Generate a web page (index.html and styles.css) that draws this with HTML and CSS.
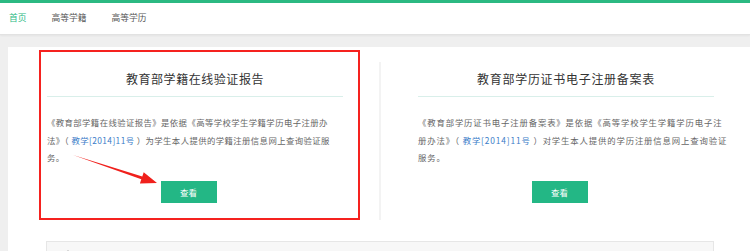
FILE: index.html
```html
<!DOCTYPE html>
<html lang="zh-CN">
<head>
    <meta charset="UTF-8">
    <meta name="viewport" content="width=device-width, initial-scale=1.0">
    <title>学信档案</title>
    <link rel="stylesheet" href="styles.css">
</head>
<body>
    <div class="topbar"></div>
    <nav class="nav">
        <a class="nav-item active" href="#">首页</a>
        <a class="nav-item" href="#">高等学籍</a>
        <a class="nav-item" href="#">高等学历</a>
    </nav>

    <div class="main">
        <div class="cols">
            <div class="col col-left">
                <h2 class="col-title">教育部学籍在线验证报告</h2>
                <p class="desc desc-left">《教育部学籍在线验证报告》是依据《高等学校学生学籍学历电子注册办<br>法》（ <a href="#">教学[2014]11号</a> ）为学生本人提供的学籍注册信息网上查询验证服<br>务。</p>
                <div class="btn-row"><a class="btn" href="#">查看</a></div>
            </div>
            <div class="col col-right">
                <h2 class="col-title">教育部学历证书电子注册备案表</h2>
                <p class="desc desc-right">《教育部学历证书电子注册备案表》是依据《高等学校学生学籍学历电子注<br>册办法》（ <a href="#">教学[2014]11号</a> ）对学生本人提供的学历注册信息网上查询验证<br>服务。</p>
                <div class="btn-row"><a class="btn" href="#">查看</a></div>
            </div>
        </div>
        <div class="notice">
            <svg class="notice-icon" width="8" height="8" viewBox="0 0 8 8"><circle cx="4" cy="4" r="3" fill="none" stroke="#999" stroke-width="1"/></svg>
        </div>
    </div>

    <!-- annotation drawn over the screenshot -->
    <div class="mark-box"></div>
    <svg class="mark-arrow" width="750" height="251" viewBox="0 0 750 251">
        <polygon points="73,155 142.3,176.5 143.7,172.2 157,183 139.9,183.6 141.3,179.3" fill="#f0201c"/>
    </svg>
</body>
</html>
```

FILE: styles.css
```css
html { overflow: hidden; }
body { margin: 0; background: #efefef; font-family: "Noto Sans CJK SC", "Microsoft YaHei", sans-serif; color: #666; position: relative; height: 251px; }
a { text-decoration: none; }

.topbar { height: 3px; background: #2bb982; }
.nav { height: 31px; background: #fff; border-bottom: 1px solid #e2e2e2; box-shadow: 0 1px 2px rgba(0, 0, 0, 0.05); display: flex; align-items: center; gap: 25px; padding-left: 9px; }
.nav-item { font-size: 8.75px; color: #555; line-height: 1; }
.nav-item.active { color: #2bb982; }

.main { margin: 12px 0 0 8px; width: 745px; background: #fff; padding-top: 15px; padding-bottom: 20px; }
.cols { display: grid; grid-template-columns: 371px 374px; }
.col-left { padding: 0 36px 17px 39px; }
.col-right { padding: 0 39px 17px 37px; border-left: 2px solid #f3f3f3; }

.col-title { margin: 0; font-size: 12px; font-weight: normal; color: #333; text-align: center; line-height: 34px; border-bottom: 1px solid #d9efea; }
.col-left .col-title { letter-spacing: 0.55px; }
.col-right .col-title { letter-spacing: 0.7px; }

.desc { margin: 17px 0 0; font-size: 8.4px; line-height: 17.5px; white-space: nowrap; }
.desc a { color: #3a7cc8; }
.desc-left { letter-spacing: 0.4px; }
.desc-right { letter-spacing: 0.85px; }

.btn-row { text-align: center; margin-top: 10px; }
.btn { display: inline-block; width: 56px; height: 22px; line-height: 22px; background: #23b785; color: #fff; font-size: 8.5px; margin-right: 13px; }

.notice { margin: 21px 0 0 38px; width: 668px; height: 30px; border: 1px solid #e6e6e6; background: #f7f7f7; box-sizing: border-box; padding: 8px 0 0 17px; }
.notice-icon { display: block; }

.mark-box { position: absolute; left: 39px; top: 50px; width: 317px; height: 166px; border: 2px solid #f5221f; }
.mark-arrow { position: absolute; left: 0; top: 0; }
```
